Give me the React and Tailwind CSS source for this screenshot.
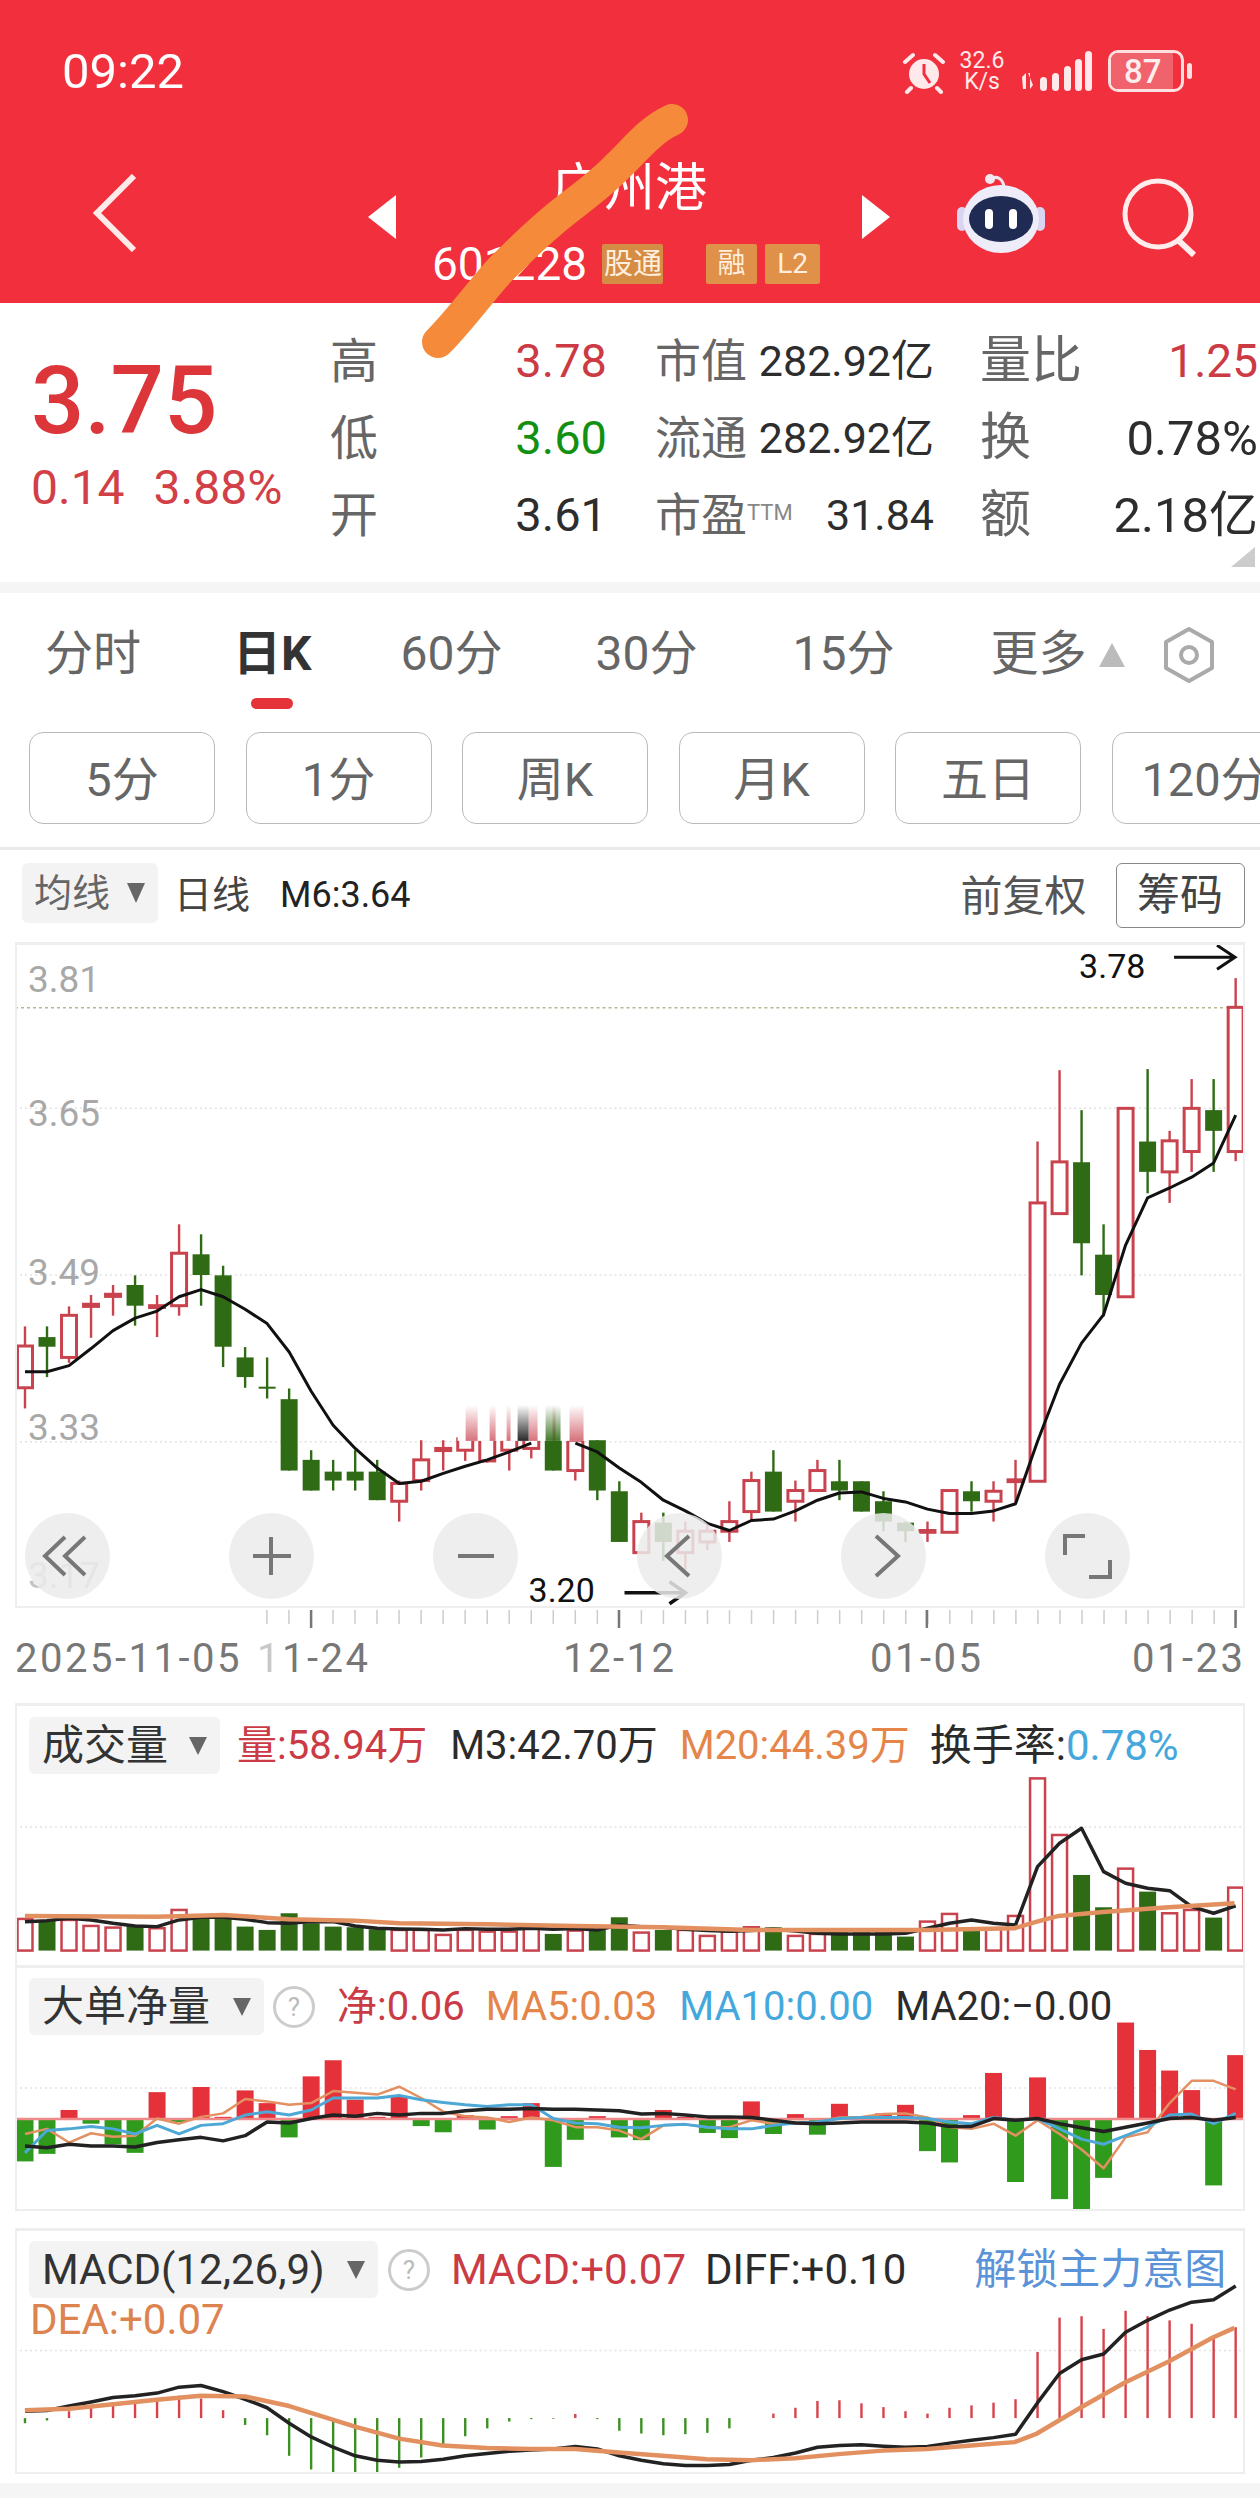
const STEP = 22.03;
const cx = (i) => 25 + i * STEP;
const zx = (v) => v / 1.244;

// candles: high, body top, body bottom, low, colour (read off the chart, in crop units)
const candles = [
  [578, 633, 750, 808, "r"], [578, 608, 635, 720, "g"], [522, 547, 665, 680, "r"], [490, 516, 522, 610, "r"],
  [462, 488, 494, 548, "r"], [435, 462, 520, 576, "g"], [490, 520, 525, 608, "r"], [292, 373, 520, 548, "r"],
  [320, 376, 434, 520, "g"], [408, 435, 635, 692, "g"], [636, 665, 720, 750, "g"], [665, 747, 752, 780, "g"],
  [752, 782, 982, 982, "g"], [925, 952, 1038, 1038, "g"], [952, 985, 1010, 1038, "g"], [925, 985, 1010, 1038, "g"],
  [952, 985, 1065, 1065, "g"], [1010, 1018, 1068, 1125, "r"], [897, 952, 1010, 1038, "r"], [897, 920, 926, 982, "r"],
  [870, 893, 925, 955, "r"], [870, 893, 955, 960, "r"], [870, 893, 925, 982, "r"], [868, 893, 920, 948, "r"],
  [868, 893, 982, 982, "g"], [893, 897, 982, 1010, "r"], [897, 897, 1038, 1065, "g"], [1012, 1040, 1182, 1182, "g"],
  [1100, 1125, 1212, 1215, "r"], [1100, 1128, 1182, 1235, "g"], [1125, 1152, 1212, 1260, "r"], [1128, 1152, 1182, 1205, "r"],
  [1068, 1125, 1152, 1182, "r"], [985, 1010, 1097, 1125, "r"], [925, 985, 1097, 1097, "g"], [1010, 1038, 1068, 1125, "r"],
  [952, 982, 1038, 1040, "r"], [952, 1012, 1038, 1065, "g"], [1012, 1012, 1097, 1097, "g"], [1040, 1068, 1125, 1152, "g"],
  [1125, 1128, 1152, 1182, "g"], [1125, 1150, 1155, 1182, "r"], [1038, 1038, 1155, 1155, "r"], [1012, 1040, 1068, 1097, "g"],
  [1012, 1040, 1068, 1125, "r"], [952, 1008, 1013, 1070, "r"], [60, 232, 1012, 1012, "r"], [-140, 117, 262, 262, "r"],
  [-28, 118, 345, 435, "g"], [292, 377, 490, 550, "g"], [-33, -33, 495, 495, "r"], [-143, 60, 145, 205, "g"],
  [30, 58, 145, 232, "r"], [-115, -33, 88, 145, "r"], [-115, -28, 30, 145, "g"], [-398, -316, 88, 115, "r"],
];

const maLine = [705, 705, 688, 640, 590, 555, 535, 495, 475, 495, 530, 570, 650, 760, 855, 920, 975, 1018, 1012, 990, 970, 952, 930, 905, 900, 905, 930, 975, 1015, 1065, 1095, 1130, 1150, 1122, 1118, 1095, 1065, 1045, 1042, 1060, 1070, 1090, 1102, 1102, 1095, 1075, 900, 740, 625, 545, 350, 218, 190, 160, 120, -14];

const volBars = [
  [717, "r"], [722, "g"], [720, "r"], [738, "r"], [743, "r"], [735, "g"], [745, "r"], [690, "r"], [715, "g"], [712, "g"],
  [740, "g"], [750, "g"], [700, "g"], [730, "g"], [740, "g"], [742, "g"], [748, "g"], [750, "r"], [750, "r"], [765, "r"],
  [750, "r"], [755, "r"], [755, "r"], [745, "r"], [762, "g"], [752, "r"], [750, "g"], [712, "g"], [758, "r"], [750, "g"],
  [750, "r"], [768, "r"], [755, "r"], [742, "r"], [742, "g"], [768, "r"], [762, "r"], [755, "g"], [755, "g"], [755, "g"],
  [770, "g"], [725, "r"], [702, "r"], [750, "g"], [745, "r"], [708, "r"], [295, "r"], [465, "r"], [585, "g"], [682, "g"],
  [566, "r"], [635, "g"], [700, "r"], [690, "r"], [713, "g"], [623, "r"],
];
const volM3 = [725, 722, 715, 720, 730, 738, 740, 720, 712, 712, 718, 728, 730, 725, 725, 738, 745, 747, 748, 750, 746, 748, 748, 745, 748, 746, 750, 735, 740, 742, 748, 752, 754, 752, 748, 753, 760, 762, 762, 762, 760, 745, 730, 720, 730, 735, 560, 490, 445, 575, 610, 625, 632, 680, 700, 678];
const volM20 = [[31, 708], [195, 710], [278, 705], [360, 718], [442, 722], [497, 730], [606, 733], [716, 738], [825, 742], [935, 750], [1044, 750], [1154, 750], [1263, 745], [1291, 725], [1318, 708], [1373, 696], [1455, 682], [1537, 670]];

const netBars = [590, 568, 440, 480, 540, 565, 388, 475, 373, 460, 383, 420, 520, 342, 295, 410, 460, 400, 487, 505, 455, 497, 458, 420, 606, 527, 458, 520, 528, 440, 460, 507, 522, 415, 510, 452, 512, 422, 460, 450, 425, 560, 593, 455, 332, 650, 345, 700, 733, 638, 185, 265, 325, 382, 660, 280];
const netMa5 = [510, 495, 535, 508, 518, 515, 465, 480, 460, 450, 408, 415, 425, 420, 385, 390, 395, 372, 405, 445, 458, 462, 475, 462, 470, 490, 490, 500, 525, 485, 482, 490, 490, 470, 480, 475, 475, 462, 460, 452, 450, 462, 490, 495, 480, 515, 470, 510, 555, 610, 520, 505, 420, 355, 355, 380];
const netMa10 = [565, 500, 495, 488, 495, 510, 485, 510, 485, 480, 455, 445, 455, 440, 405, 405, 405, 398, 410, 418, 425, 430, 425, 425, 465, 478, 480, 490, 492, 485, 482, 490, 495, 495, 485, 478, 475, 465, 462, 462, 462, 465, 475, 480, 462, 470, 465, 495, 525, 540, 515, 490, 455, 452, 480, 450];
const netMa20 = [545, 550, 540, 545, 545, 548, 535, 527, 520, 530, 515, 475, 478, 465, 455, 458, 450, 455, 450, 450, 442, 438, 438, 436, 438, 438, 440, 442, 452, 450, 455, 460, 460, 462, 470, 478, 480, 478, 475, 475, 475, 478, 488, 488, 465, 470, 465, 480, 492, 503, 490, 478, 465, 462, 470, 462];

const macdBars = [1350, 1342, 1315, 1305, 1295, 1290, 1285, 1270, 1278, 1312, 1355, 1385, 1445, 1485, 1497, 1497, 1497, 1480, 1450, 1415, 1388, 1365, 1345, 1338, 1337, 1323, 1338, 1372, 1380, 1385, 1382, 1378, 1365, 1335, 1322, 1305, 1285, 1283, 1292, 1303, 1315, 1322, 1305, 1298, 1290, 1280, 1142, 1042, 1038, 1075, 1022, 1038, 1050, 1060, 1095, 1070];
const diff = [1315, 1313, 1300, 1288, 1275, 1270, 1262, 1245, 1240, 1258, 1280, 1305, 1350, 1390, 1420, 1445, 1458, 1463, 1462, 1455, 1445, 1438, 1432, 1428, 1425, 1418, 1425, 1445, 1458, 1468, 1473, 1473, 1470, 1458, 1450, 1437, 1420, 1415, 1413, 1417, 1420, 1418, 1408, 1400, 1392, 1382, 1290, 1205, 1165, 1148, 1085, 1050, 1020, 997, 990, 950];
const dea = [[31, 1312], [86, 1308], [141, 1295], [195, 1282], [250, 1270], [305, 1272], [360, 1300], [442, 1360], [497, 1395], [551, 1415], [606, 1422], [661, 1425], [716, 1425], [770, 1435], [825, 1445], [880, 1455], [935, 1458], [990, 1452], [1044, 1440], [1099, 1430], [1154, 1425], [1209, 1415], [1263, 1405], [1291, 1380], [1345, 1305], [1400, 1232], [1455, 1170], [1510, 1100], [1537, 1072]];

const RED_K = "#c9434e";
const GREEN_K = "#2f6a15";

const y1 = (v) => 1120 + v / 2.8;
const y2 = (v) => 1680 + v / 3;
const y3 = (v) => 1960 + v / 2.914;
const pts = (arr, fy) => arr.map((v, i) => `${cx(i).toFixed(1)},${fy(v).toFixed(1)}`).join(" ");
const xyPts = (arr, fy) => arr.map(([x, y]) => `${zx(x).toFixed(1)},${fy(y).toFixed(1)}`).join(" ");

const Dropdown = ({ label, className }) => (
  <div className={`flex items-center justify-between bg-[#f3f3f3] rounded-md pl-[13px] pr-[12px] h-[57px] ${className}`}>
    <span className="text-[42px] leading-none text-[#333] whitespace-nowrap">{label}</span>
    <svg width="20" height="22" viewBox="0 0 20 22" className="shrink-0">
      <path d="M1 2h18L10 20z" fill="#666" />
    </svg>
  </div>
);

const Help = () => (
  <div className="w-[42px] h-[42px] rounded-full border-[3px] border-[#ccc] flex items-center justify-center text-[26px] text-[#bbb] leading-none shrink-0">?</div>
);

const KChart = () => (
  <svg className="absolute inset-0 w-full h-full" viewBox="17 945 1227 661">
    <defs>
      <linearGradient id="smearR" x1="0" y1="0" x2="0" y2="1">
        <stop offset="0" stopColor="#c9434e" stopOpacity="0" />
        <stop offset="1" stopColor="#c9434e" stopOpacity="0.75" />
      </linearGradient>
      <linearGradient id="smearK" x1="0" y1="0" x2="0" y2="1">
        <stop offset="0" stopColor="#111" stopOpacity="0" />
        <stop offset="1" stopColor="#111" stopOpacity="0.9" />
      </linearGradient>
      <linearGradient id="smearG" x1="0" y1="0" x2="0" y2="1">
        <stop offset="0" stopColor="#2f6a15" stopOpacity="0" />
        <stop offset="1" stopColor="#2f6a15" stopOpacity="0.9" />
      </linearGradient>
    </defs>
    <line x1="15" x2="1246" y1="1007.5" y2="1007.5" stroke="#b7b596" strokeWidth="1.5" strokeDasharray="3 3" />
    {[1108, 1275, 1442].map((y) => (
      <line key={y} x1="15" x2="1246" y1={y} y2={y} stroke="#e2e2e2" strokeWidth="1.5" strokeDasharray="2 3" />
    ))}
    {[["3.81", 992], ["3.65", 1126], ["3.49", 1285], ["3.33", 1440], ["3.17", 1588]].map(([t, y]) => (
      <text key={t} x="28" y={y} fontSize="37" fill={t === "3.17" ? "#c4c4c4" : "#a8a8a8"}>{t}</text>
    ))}
    {candles.map(([h, t, b, l, c], i) => {
      const x = cx(i);
      const col = c === "r" ? RED_K : GREEN_K;
      return (
        <g key={i}>
          <line x1={x} x2={x} y1={y1(h)} y2={y1(l)} stroke={col} strokeWidth="2.4" />
          {c === "r" ? (
            <rect x={x - 7.5} y={y1(t)} width="15" height={Math.max(y1(b) - y1(t), 1)} fill="#fff" stroke={col} strokeWidth="3" />
          ) : (
            <rect x={x - 8.5} y={y1(t)} width="17" height={Math.max(y1(b) - y1(t), 2)} fill={col} />
          )}
        </g>
      );
    })}
    <polyline points={pts(maLine.slice(0, 24), y1)} fill="none" stroke="#111" strokeWidth="3" strokeLinejoin="round" />
    <polyline points={maLine.slice(25).map((v, i) => `${cx(i + 25).toFixed(1)},${y1(v).toFixed(1)}`).join(" ")} fill="none" stroke="#111" strokeWidth="3" strokeLinejoin="round" />
    {/* smeared strip above the middle candles */}
    <rect x="458" y="1405" width="130" height="36" fill="#fff" />
    {[[466, 12], [490, 6], [507, 4], [529, 9]].map(([x, w]) => (
      <rect key={x} x={x} y="1405" width={w} height="36" fill="url(#smearR)" />
    ))}
    <rect x="553" y="1405" width="3" height="36" fill="url(#smearR)" />
    <rect x="518" y="1405" width="11" height="36" fill="url(#smearK)" />
    <rect x="546" y="1405" width="15" height="36" fill="url(#smearG)" />
    <rect x="570" y="1405" width="14" height="36" fill="url(#smearR)" />
    <text x="1080" y="978" fontSize="34" fill="#111">3.78</text>
    <path d="M1175 957h60M1218 945l18 12-18 12" fill="none" stroke="#111" strokeWidth="3" />
    <text x="529" y="1602" fontSize="34" fill="#111">3.20</text>
    <path d="M625 1593h60M670 1582l16 11-16 11" fill="none" stroke="#111" strokeWidth="3.5" />
  </svg>
);

const ChartButtons = () => (
  <div className="absolute left-[8px] top-[568px] flex gap-[119px]">
    {[
      "M40 24L20 43l20 19M60 24L40 43l20 19",
      "M42 24v38M24 43h38",
      "M25 43h36",
      "M52 23L30 43l22 20",
      "M35 23l22 20-22 20",
      "M40 23H20V42M65 47V64H44",
    ].map((d) => (
      <div key={d} className="w-[85px] h-[86px] rounded-full bg-[#ebebeb]/85">
        <svg width="85" height="86" viewBox="0 0 85 86">
          <path d={d} fill="none" stroke="#777" strokeWidth="4" />
        </svg>
      </div>
    ))}
  </div>
);

const TimeAxis = () => (
  <div className="h-[95px]">
    <svg className="block" width="1260" height="32" viewBox="0 1608 1260 32">
      {Array.from({ length: 45 }).map((_, i) => {
        const x = zx(332) + i * STEP;
        return <line key={i} x1={x} x2={x} y1="1610" y2="1624" stroke="#ccc" strokeWidth="1.5" />;
      })}
      {[387, 770, 1153, 1537].map((v) => (
        <line key={v} x1={zx(v)} x2={zx(v)} y1="1610" y2="1628" stroke="#777" strokeWidth="2.5" />
      ))}
    </svg>
    <div className="flex text-[40px] leading-[38px] text-[#777] tracking-[2.5px] whitespace-nowrap">
      <span className="ml-[15px] w-[242px]">2025-11-05</span>
      <span className="w-[306px]"><span className="opacity-40">1</span>1-24</span>
      <span className="w-[307px]">12-12</span>
      <span className="w-[262px]">01-05</span>
      <span>01-23</span>
    </div>
  </div>
);

const VolumePanel = () => (
  <div className="relative mx-[15px] h-[262px] border-x-2 border-t-[3px] border-[#eee]">
    <svg className="absolute inset-0 w-full h-full" viewBox="17 1706 1227 259">
      <line x1="15" x2="1246" y1="1827" y2="1827" stroke="#e2e2e2" strokeWidth="1.5" strokeDasharray="2 3" />
      {volBars.map(([t, c], i) => {
        const x = cx(i);
        return c === "r" ? (
          <rect key={i} x={x - 7.5} y={y2(t)} width="15" height={y2(812) - y2(t)} fill="#fff" stroke={RED_K} strokeWidth="2.5" />
        ) : (
          <rect key={i} x={x - 8.5} y={y2(t)} width="17" height={y2(812) - y2(t)} fill={GREEN_K} />
        );
      })}
      <polyline points={pts(volM3, y2)} fill="none" stroke="#222" strokeWidth="3.5" strokeLinejoin="round" />
      <polyline points={xyPts(volM20, y2)} fill="none" stroke="#e2905f" strokeWidth="4.5" strokeLinejoin="round" />
    </svg>
    <div className="relative flex items-center pt-[11px] pl-[12px] text-[40px] leading-none whitespace-nowrap">
      <Dropdown label="成交量" className="w-[191px]" />
      <span className="ml-[17px] text-[#cb3b45]">量:58.94万</span>
      <span className="ml-[23px] text-[#2b2b2b]">M3:42.70万</span>
      <span className="ml-[22px] text-[#e5854a]">M20:44.39万</span>
      <span className="ml-[20px] text-[42px] text-[#2b2b2b]">换手率:<span className="text-[#45a8dc]">0.78%</span></span>
    </div>
  </div>
);

const NetPanel = () => (
  <div className="relative mx-[15px] h-[246px] border-x-2 border-b-2 border-t-[3px] border-[#eee]">
    <svg className="absolute inset-0 w-full h-full" viewBox="17 1969 1227 241">
      <line x1="15" x2="1246" y1="2089" y2="2089" stroke="#e2e2e2" strokeWidth="1.5" strokeDasharray="2 3" />
      {netBars.map((t, i) => {
        const y = y3(t);
        const base = y3(466);
        return (
          <rect key={i} x={cx(i) - 8.5} y={Math.min(y, base)} width="17" height={Math.abs(base - y)} fill={t < 466 ? "#e5313a" : "#2f9a1c"} />
        );
      })}
      <line x1="15" x2="1246" y1={y3(466)} y2={y3(466)} stroke="#f08a8a" strokeWidth="2.5" />
      <polyline points={pts(netMa5, y3)} fill="none" stroke="#e39063" strokeWidth="2.5" strokeLinejoin="round" />
      <polyline points={pts(netMa10, y3)} fill="none" stroke="#4ea8d6" strokeWidth="3" strokeLinejoin="round" />
      <polyline points={pts(netMa20, y3)} fill="none" stroke="#222" strokeWidth="3.5" strokeLinejoin="round" />
    </svg>
    <div className="relative flex items-center pt-[10px] pl-[12px] text-[40px] leading-none whitespace-nowrap">
      <Dropdown label="大单净量" className="w-[235px]" />
      <div className="ml-[9px]"><Help /></div>
      <span className="ml-[22px] text-[#cb3b45]">净:0.06</span>
      <span className="ml-[21px] text-[#e5854a]">MA5:0.03</span>
      <span className="ml-[22px] text-[#45a8dc]">MA10:0.00</span>
      <span className="ml-[22px] text-[#2b2b2b]">MA20:−0.00</span>
    </div>
  </div>
);

const MacdPanel = () => (
  <div className="relative mx-[15px] mt-[17px] h-[246px] border-x-2 border-b-2 border-t-[3px] border-[#eee]">
    <svg className="absolute inset-0 w-full h-full" viewBox="17 2231 1227 241">
      <line x1="15" x2="1246" y1={y3(1138)} y2={y3(1138)} stroke="#e2e2e2" strokeWidth="1.5" strokeDasharray="2 3" />
      {macdBars.map((t, i) => (
        <line key={i} x1={cx(i)} x2={cx(i)} y1={y3(1335)} y2={y3(t)} stroke={t < 1335 ? "#d8434b" : "#3c8f22"} strokeWidth="2.4" />
      ))}
      <polyline points={pts(diff, y3)} fill="none" stroke="#222" strokeWidth="3.5" strokeLinejoin="round" />
      <polyline points={xyPts(dea, y3)} fill="none" stroke="#e2905f" strokeWidth="4.5" strokeLinejoin="round" />
    </svg>
    <div className="relative flex items-center pt-[10px] pl-[12px] text-[42px] leading-none whitespace-nowrap">
      <Dropdown label="MACD(12,26,9)" className="w-[349px]" />
      <div className="ml-[10px]"><Help /></div>
      <span className="ml-[21px] text-[#cb3b45]">MACD:+0.07</span>
      <span className="ml-[19px] text-[#2b2b2b]">DIFF:+0.10</span>
      <span className="ml-[68px] text-[#5a93d8]">解锁主力意图</span>
    </div>
    <div className="relative pl-[13px] mt-[1px] text-[42px] leading-none text-[#dd8350]">DEA:+0.07</div>
  </div>
);

const QuoteRow = ({ a, aVal, aColor, b, bSup, bVal, c, cVal, cColor, cSize }) => (
  <div className="flex h-[77px] items-center whitespace-nowrap">
    <div className="flex w-[277px] items-center justify-between">
      <span className="text-[48px] text-[#666]">{a}</span>
      <span className={`text-[47px] ${aColor}`}>{aVal}</span>
    </div>
    <div className="ml-[48px] flex w-[279px] items-center justify-between">
      <span className="text-[46px] text-[#666]">
        {b}
        {bSup && <sup className="text-[22px] text-[#888]">TTM</sup>}
      </span>
      <span className="text-[43px] text-[#2d2d2d]">{bVal}</span>
    </div>
    <div className="ml-[46px] flex w-[278px] items-center justify-between">
      <span className="text-[51px] text-[#666]">{c}</span>
      <span className={`${cSize} ${cColor}`}>{cVal}</span>
    </div>
  </div>
);

const App = () => {
  return (
    <div className="relative w-[1260px] h-[2498px] overflow-hidden bg-white font-['Roboto','Noto_Sans_CJK_SC',sans-serif]">
      {/* header */}
      <div className="h-[303px] bg-[#f22f3c] text-white">
        <div className="flex h-[115px] items-start pt-[46px]">
          <span className="ml-[62px] text-[49px] leading-[52px]">09:22</span>
          <svg className="ml-[718px] mt-[4px]" width="44" height="44" viewBox="0 0 44 44" fill="none">
            <circle cx="22" cy="24" r="15" fill="#ffe9ea" />
            <path d="M22 14v10l6 9" stroke="#f22f3c" strokeWidth="3" />
            <path d="M3 12l8-7M41 12l-8-7M9 38l-4 4M35 38l4 4" stroke="#ffe9ea" strokeWidth="4" strokeLinecap="round" />
          </svg>
          <div className="ml-[9px] mt-[4px] flex w-[54px] flex-col items-center text-[23px] leading-[21px] text-[#ffe9ea]">
            <span>32.6</span>
            <span>K/s</span>
          </div>
          <svg className="ml-[11px] mt-[5px]" width="72" height="42" viewBox="0 0 72 42" fill="#ffe9ea">
            <path d="M2 26l4-4v16H3zM8 22h2v16l3-4z" />
            <rect x="20" y="26" width="7" height="14" rx="3.5" />
            <rect x="32" y="22" width="7" height="18" rx="3.5" />
            <rect x="44" y="15" width="7" height="25" rx="3.5" />
            <rect x="55" y="8" width="7" height="32" rx="3.5" />
            <rect x="65" y="0" width="7" height="40" rx="3.5" />
          </svg>
          <div className="relative ml-[16px] mt-[4px] flex h-[42px] w-[76px] items-center overflow-hidden rounded-[10px] border-[3px] border-[#ffe0e0]">
            <div className="absolute inset-y-0 left-0 w-[62px] bg-[#f0636d]" />
            <span className="relative ml-[13px] text-[33px] font-medium leading-none text-[#ffeeee]">87</span>
          </div>
          <div className="ml-[3px] mt-[17px] h-[16px] w-[5px] rounded-full bg-[#ffe0e0]" />
        </div>

        <div className="flex h-[188px] items-start">
          <svg className="ml-[90px] mt-[59px]" width="48" height="78" viewBox="0 0 48 78" fill="none">
            <path d="M42 2L5 39l37 37" stroke="#ffeaea" strokeWidth="6" transform="translate(2 0)" />
          </svg>
          <svg className="ml-[230px] mt-[80px]" width="28" height="44" viewBox="0 0 28 44">
            <path d="M28 0v44L0 22z" fill="#fff" />
          </svg>
          <div className="flex w-[466px] flex-col">
            <div className="mt-[44px] text-center text-[52px] leading-[60px]">广州港</div>
            <div className="mt-[23px] flex items-center pl-[36px]">
              <span className="text-[46px] leading-[44px]">601228</span>
              <div className="ml-[15px] flex h-[40px] w-[61px] items-center justify-end overflow-hidden rounded-[2px] bg-[#d58c44] pr-[1px]">
                <span className="whitespace-nowrap text-[29px] leading-none text-[#ffeedd]">股通</span>
              </div>
              <div className="ml-[43px] flex h-[40px] w-[51px] items-center justify-center rounded-[2px] bg-[#df9049] text-[28px] leading-none text-[#ffeedd]">融</div>
              <div className="ml-[8px] flex h-[40px] w-[55px] items-center justify-center rounded-[2px] bg-[#df9049] text-[28px] leading-none text-[#ffeedd]">L2</div>
            </div>
          </div>
          <svg className="mt-[80px]" width="28" height="44" viewBox="0 0 28 44">
            <path d="M0 0v44l28-22z" fill="#fff" />
          </svg>
          <svg className="ml-[67px] mt-[58px]" width="88" height="80" viewBox="0 0 88 80">
            <path d="M34 6c6-4 12 0 13 8" fill="none" stroke="#eee6f5" strokeWidth="3" />
            <circle cx="33" cy="6" r="5" fill="#f4e8f0" />
            <rect x="0" y="34" width="10" height="24" rx="5" fill="#d9d4f0" />
            <rect x="78" y="34" width="10" height="24" rx="5" fill="#d9d4f0" />
            <ellipse cx="44" cy="46" rx="38" ry="34" fill="#eeecf8" />
            <ellipse cx="44" cy="46" rx="32" ry="23" fill="#1f2b52" />
            <rect x="28" y="36" width="8" height="20" rx="4" fill="#fff" />
            <rect x="52" y="36" width="8" height="20" rx="4" fill="#fff" />
          </svg>
          <svg className="ml-[75px] mt-[60px]" width="80" height="84" viewBox="0 0 80 84" fill="none">
            <circle cx="38" cy="39" r="33" stroke="#ffecec" strokeWidth="5" />
            <path d="M58 65l16 15" stroke="#ffecec" strokeWidth="6" />
          </svg>
        </div>
      </div>

      {/* quote */}
      <div className="relative flex h-[279px]">
        <div className="w-[330px] pl-[31px] pt-[48px]">
          <div className="text-[94px] font-medium leading-[100px] text-[#dc363b]">3.75</div>
          <div className="mt-[12px] flex gap-[29px] whitespace-nowrap text-[48px] leading-[50px] text-[#d23f47]">
            <span>0.14</span>
            <span>3.88%</span>
          </div>
        </div>
        <div className="pt-[20px]">
          <QuoteRow a="高" aVal="3.78" aColor="text-[#cc3a44]" b="市值" bVal="282.92亿" c="量比" cVal="1.25" cColor="text-[#cc3a44]" cSize="text-[46px]" />
          <QuoteRow a="低" aVal="3.60" aColor="text-[#119012]" b="流通" bVal="282.92亿" c="换" cVal="0.78%" cColor="text-[#2d2d2d]" cSize="text-[49px]" />
          <QuoteRow a="开" aVal="3.61" aColor="text-[#2d2d2d]" b="市盈" bSup bVal="31.84" c="额" cVal="2.18亿" cColor="text-[#2d2d2d]" cSize="text-[49px]" />
        </div>
        <svg className="absolute right-[5px] bottom-[15px]" width="24" height="20" viewBox="0 0 24 20">
          <path d="M24 0v20H0z" fill="#ccc" />
        </svg>
      </div>
      <div className="h-[11px] bg-[#f5f5f5]" />

      {/* period tabs */}
      <div className="relative flex h-[139px] items-start whitespace-nowrap pt-[32px] text-[48px] leading-[58px] text-[#666]">
        <span className="ml-[45px]">分时</span>
        <span className="ml-[92px] font-bold text-[#333]">日K</span>
        <span className="ml-[89px]">60分</span>
        <span className="ml-[93px]">30分</span>
        <span className="ml-[95px]">15分</span>
        <span className="ml-[96px]">更多</span>
        <svg className="ml-[12px] mt-[17px]" width="28" height="26" viewBox="0 0 28 26">
          <path d="M14 1l13 24H1z" fill="#bbb" />
        </svg>
        <svg className="ml-[34px] mt-[1px]" width="58" height="58" viewBox="0 0 58 58" fill="none">
          <path d="M29 3L52 16V42L29 55L6 42V16z" stroke="#aaa" strokeWidth="4" strokeLinejoin="round" />
          <circle cx="29" cy="29" r="8" stroke="#aaa" strokeWidth="4" />
        </svg>
        <div className="absolute left-[251px] top-[105px] h-[11px] w-[42px] rounded-full bg-[#e5333a]" />
      </div>

      {/* sub periods */}
      <div className="flex h-[92px] gap-[30.5px] whitespace-nowrap pl-[29px]">
        {["5分", "1分", "周K", "月K", "五日", "120分"].map((t) => (
          <div key={t} className="flex h-[92px] w-[186px] shrink-0 items-center justify-center rounded-[14px] border-[1.5px] border-[#bbb] pt-[2px] text-[47px] leading-none text-[#666]">
            {t}
          </div>
        ))}
      </div>
      <div className="mt-[23px] h-[3px] bg-[#e9e9e9]" />

      {/* main indicators */}
      <div className="flex h-[92px] items-start whitespace-nowrap pt-[13px]">
        <div className="ml-[22px] flex h-[60px] w-[136px] items-center justify-between rounded-md bg-[#f3f3f3] px-[12px]">
          <span className="text-[38px] leading-none text-[#666]">均线</span>
          <svg width="20" height="24" viewBox="0 0 20 24"><path d="M1 2h18L10 22z" fill="#666" /></svg>
        </div>
        <span className="ml-[16px] mt-[9px] text-[38px] leading-[46px] text-[#444]">日线</span>
        <span className="ml-[30px] mt-[9px] text-[36px] leading-[46px] text-[#222]">M6:3.64</span>
        <span className="ml-[550px] mt-[10px] text-[42px] leading-[48px] text-[#555]">前复权</span>
        <div className="ml-[29px] flex h-[65px] w-[129px] items-center justify-center rounded-md border-[1.5px] border-[#888] text-[43px] leading-none text-[#444]">筹码</div>
      </div>

      {/* k line */}
      <div className="relative mx-[15px] h-[666px] border-x-2 border-t-[3px] border-b-2 border-[#eee]">
        <KChart />
        <ChartButtons />
      </div>
      <TimeAxis />

      <VolumePanel />
      <NetPanel />
      <MacdPanel />
      <div className="mt-[9px] h-[30px] bg-[#f5f5f5]" />

      {/* orange scribble drawn over the screenshot */}
      <svg className="absolute left-0 top-0 pointer-events-none" width="1260" height="370" viewBox="0 0 1260 370" fill="none">
        <path d="M672 120C650 130 635 150 617 167C595 190 570 205 550 223C530 240 515 255 500 270C480 292 460 320 438 342" stroke="#f58a3a" strokeWidth="32" strokeLinecap="round" strokeLinejoin="round" />
      </svg>
    </div>
  );
};

export default App;
